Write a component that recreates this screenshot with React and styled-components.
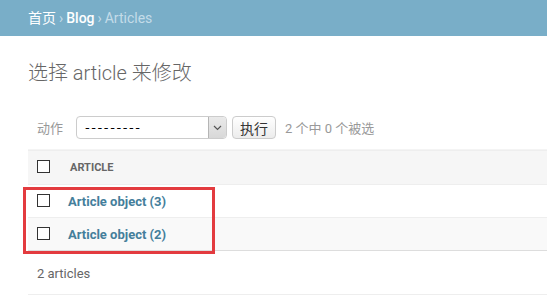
import React from "react";
import styled, { createGlobalStyle } from "styled-components";

const Global = createGlobalStyle`
  html, body { margin: 0; padding: 0; background: #fff; }
  body { font-family: Roboto, "Noto Sans CJK SC", "Liberation Sans", sans-serif; color: #333; overflow: hidden; }
`;

const Page = styled.div`
  width: 547px;
  height: 296px;
  overflow: hidden;
`;

const Breadcrumbs = styled.div`
  background: #79aec8;
  height: 36px;
  box-sizing: border-box;
  padding: 10px 28px;
  font-size: 14px;
  line-height: 16px;
  color: #c4dce8;
  white-space: nowrap;
`;

const Crumb = styled.a`
  color: #fff;
  text-decoration: none;
  font-weight: ${(p) => (p.$bold ? 500 : 400)};
`;

const Sep = styled.span`
  margin: 0 3px;
`;

const Content = styled.div`
  padding: 25px 0 0 28px;
`;

const Title = styled.h1`
  margin: 0 0 21px;
  font-size: 20px;
  line-height: 24px;
  font-weight: 300;
  color: #666;
  white-space: nowrap;
`;

const Changelist = styled.div`
  position: relative;
`;

const Actions = styled.div`
  display: flex;
  align-items: center;
  padding: 10px 9px 10px;
  border-bottom: 1px solid #f4f4f4;
  height: 23px;
  font-size: 13px;
  color: #999;
  white-space: nowrap;
`;

const Label = styled.span`
  width: 39px;
`;

const Select = styled.div`
  display: flex;
  width: 151px;
  height: 23px;
  box-sizing: border-box;
  border: 1px solid #ccc;
  border-radius: 4px;
  background: #fff;
  overflow: hidden;
`;

const SelectText = styled.span`
  flex: 1;
  padding-left: 8px;
  font-family: "DejaVu Sans", sans-serif;
  font-size: 13px;
  line-height: 21px;
  color: #000;
  letter-spacing: 1.6px;
`;

const SelectArrow = styled.span`
  width: 17px;
  display: flex;
  align-items: center;
  justify-content: center;
  background: linear-gradient(#eaeaea, #d8d8d8);
  border-left: 1px solid #b5b5b5;
  border-radius: 0 3px 3px 0;
`;

const Button = styled.button`
  margin-left: 5px;
  height: 23px;
  width: 44px;
  padding: 0;
  border: 1px solid #ccc;
  border-radius: 4px;
  background: linear-gradient(#fff, #ececec);
  font-family: inherit;
  font-size: 14px;
  color: #333;
`;

const Counter = styled.span`
  margin-left: 9px;
  font-size: 13px;
  color: #999;
`;

const Table = styled.div`
  display: flex;
  flex-direction: column;
`;

const Row = styled.div`
  display: flex;
  align-items: center;
  height: ${(p) => (p.$head ? 33 : 32)}px;
  background: ${(p) => p.$bg};
  border-top: ${(p) => (p.$head ? "1px solid #eee" : "none")};
  border-bottom: 1px solid ${(p) => p.$line || "#eee"};
  padding-left: 9px;
`;

const Check = styled.span`
  width: 13px;
  height: 13px;
  box-sizing: border-box;
  border: 1px solid #333;
  background: #fff;
  margin-top: ${(p) => p.$dy || 0}px;
  flex: none;
`;

const HeadText = styled.span`
  margin-left: 20px;
  font-size: 11px;
  font-weight: 700;
  color: #666;
  text-transform: uppercase;
`;

const Link = styled.a`
  margin-left: 18px;
  font-size: 13px;
  font-weight: 700;
  color: #447e9b;
  text-decoration: none;
`;

const Paginator = styled.div`
  height: 44px;
  box-sizing: border-box;
  padding: 1px 0 0 9px;
  display: flex;
  align-items: center;
  font-size: 13px;
  color: #666;
  border-bottom: 1px solid #eee;
`;

const Highlight = styled.div`
  position: absolute;
  left: -5px;
  top: 81px;
  width: 192px;
  height: 67px;
  box-sizing: border-box;
  border: 3px solid #e33b3f;
  pointer-events: none;
`;

export default function App() {
  return (
    <Page>
      <Global />
      <Breadcrumbs>
        <Crumb href="#">首页</Crumb>
        <Sep>›</Sep>
        <Crumb href="#" $bold>Blog</Crumb>
        <Sep>›</Sep>
        Articles
      </Breadcrumbs>
      <Content>
        <Title>选择 article 来修改</Title>
        <Changelist>
          <Actions>
            <Label>动作</Label>
            <Select>
              <SelectText>---------</SelectText>
              <SelectArrow>
                <svg width="9" height="6" viewBox="0 0 9 6">
                  <path d="M1 1 L4.5 4.5 L8 1" fill="none" stroke="#555" strokeWidth="1.2" />
                </svg>
              </SelectArrow>
            </Select>
            <Button>执行</Button>
            <Counter>2 个中 0 个被选</Counter>
          </Actions>
          <Table>
            <Row $head $bg="#f6f6f6">
              <Check $dy={-3} />
              <HeadText>Article</HeadText>
            </Row>
            <Row $bg="#fff">
              <Check $dy={-2} />
              <Link href="#">Article object (3)</Link>
            </Row>
            <Row $bg="#f9f9f9" $line="#ddd">
              <Check $dy={-2} />
              <Link href="#">Article object (2)</Link>
            </Row>
          </Table>
          <Paginator>2 articles</Paginator>
          <Highlight />
        </Changelist>
      </Content>
    </Page>
  );
}
